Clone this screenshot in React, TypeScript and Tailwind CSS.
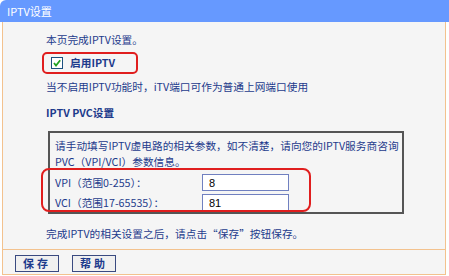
import React from "react";

const FONT = { fontFamily: '"Noto Sans CJK SC", "Noto Sans", sans-serif' };

function CheckBox() {
  return (
    <svg width="12" height="12" viewBox="0 0 12 12" className="shrink-0">
      <rect x="0.5" y="0.5" width="11" height="11" fill="#ffffff" stroke="#1c5180" />
      <path d="M3 6 L5 8.5 L9.2 3.2" fill="none" stroke="#21a121" strokeWidth="1.8" />
    </svg>
  );
}

function Field({ label, value }: { label: string; value: string }) {
  return (
    <div className="flex items-center h-[17px]">
      <span className="w-[147px] shrink-0">{label}</span>
      <div className="w-[87px] h-[17px] bg-white border border-[#7080c0] flex items-center pl-[6px] text-black text-[11px]" style={{ fontFamily: '"Liberation Sans", sans-serif' }}>
        {value}
      </div>
    </div>
  );
}

export default function App() {
  return (
    <div className="w-[449px] h-[276px] bg-white text-[#1d3b8c] text-[10.7px] leading-[16px] relative" style={FONT}>
      {/* title bar */}
      <div className="h-[22px] bg-[#6699ff] rounded-tl-[6px] flex items-center pl-[7px] text-white text-[11px]">
        IPTV设置
      </div>

      <div className="ml-[2px] w-[444px] h-[253px] bg-[#f5f5f5] border-l border-r border-b border-[#f3c28e] flex flex-col">
        <div className="pl-[43px] pt-[10px] flex flex-col">
          <div className="h-[16px]">本页完成IPTV设置。</div>

          <div className="mt-[4px] ml-[-4px] w-[96px] h-[22px] border-2 border-[#e01e1e] rounded-[5px] flex items-center gap-[7px] pl-[7px]">
            <CheckBox />
            <span className="font-bold">启用IPTV</span>
          </div>

          <div className="mt-[5px] h-[16px]">当不启用IPTV功能时，iTV端口可作为普通上网端口使用</div>

          <div className="mt-[10px] h-[16px] font-bold">IPTV PVC设置</div>

          <div className="mt-[10px] ml-[2px] w-[356px] h-[83px] border-2 border-[#555555] pl-[5px] pt-[5px] flex flex-col">
            <div className="h-[16px]">请手动填写IPTV虚电路的相关参数，如不清楚，请向您的IPTV服务商咨询</div>
            <div className="h-[16px]">PVC（VPI/VCI）参数信息。</div>
            <div className="mt-[4px] flex flex-col gap-[3px]">
              <Field label="VPI（范围0-255）：" value="8" />
              <Field label="VCI（范围17-65535）：" value="81" />
            </div>
          </div>

          <div className="mt-[12px] h-[16px]">完成IPTV的相关设置之后，请点击“保存”按钮保存。</div>
        </div>

        <div className="mt-[7px] border-t border-[#f3c28e] flex items-center gap-[13px] pl-[12px] pt-[5px]">
          <button className="w-[44px] h-[17px] bg-[#f0f0f0] border border-[#3a4a80] font-bold tracking-[3px] text-[11px] leading-none flex items-center justify-center">保存</button>
          <button className="w-[44px] h-[17px] bg-[#f0f0f0] border border-[#3a4a80] font-bold tracking-[3px] text-[11px] leading-none flex items-center justify-center">帮助</button>
        </div>
      </div>

      {/* red annotation around the PVC fields */}
      <div className="absolute left-[41px] top-[168px] w-[270px] h-[44px] border-2 border-[#e01e1e] rounded-[8px] pointer-events-none" />
    </div>
  );
}
